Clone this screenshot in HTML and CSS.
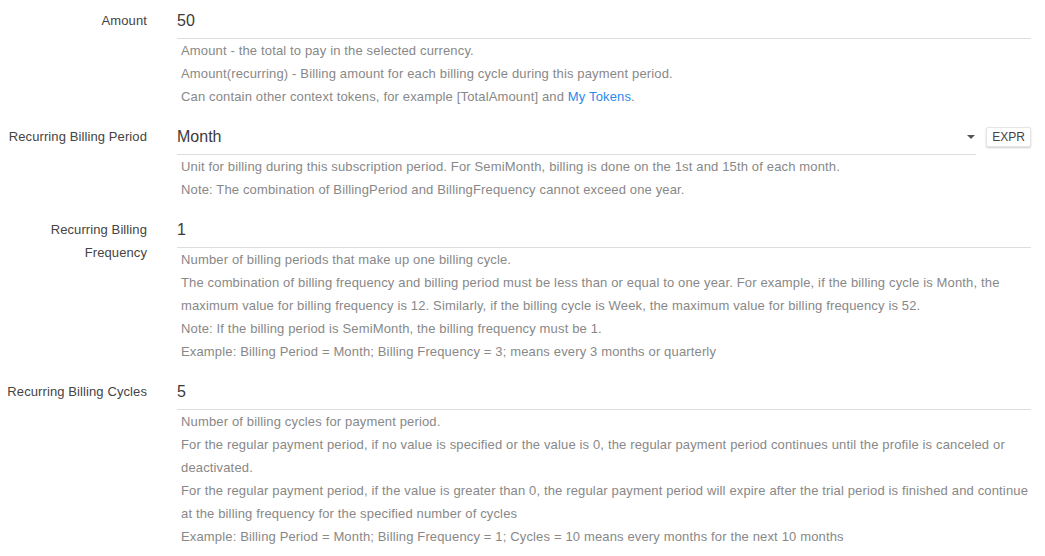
FILE: index.html
```html
<!DOCTYPE html>
<html>
<head>
<meta charset="utf-8">
<link rel="stylesheet" href="styles.css">
</head>
<body>
<div class="form">
  <div class="row">
    <div class="label">Amount</div>
    <div class="field">
      <div class="control">
        <div class="input">50</div>
      </div>
      <div class="help">
        <div>Amount - the total to pay in the selected currency.</div>
        <div>Amount(recurring) - Billing amount for each billing cycle during this payment period.</div>
        <div>Can contain other context tokens, for example [TotalAmount] and <a class="link">My Tokens</a>.</div>
      </div>
    </div>
  </div>

  <div class="row">
    <div class="label">Recurring Billing Period</div>
    <div class="field">
      <div class="control">
        <div class="input select">
          <span>Month</span>
          <span class="caret"></span>
        </div>
        <div class="expr">EXPR</div>
      </div>
      <div class="help">
        <div>Unit for billing during this subscription period. For SemiMonth, billing is done on the 1st and 15th of each month.</div>
        <div>Note: The combination of BillingPeriod and BillingFrequency cannot exceed one year.</div>
      </div>
    </div>
  </div>

  <div class="row">
    <div class="label">Recurring Billing Frequency</div>
    <div class="field">
      <div class="control">
        <div class="input">1</div>
      </div>
      <div class="help">
        <div>Number of billing periods that make up one billing cycle.</div>
        <div>The combination of billing frequency and billing period must be less than or equal to one year. For example, if the billing cycle is Month, the maximum value for billing frequency is 12. Similarly, if the billing cycle is Week, the maximum value for billing frequency is 52.</div>
        <div>Note: If the billing period is SemiMonth, the billing frequency must be 1.</div>
        <div>Example: Billing Period = Month; Billing Frequency = 3; means every 3 months or quarterly</div>
      </div>
    </div>
  </div>

  <div class="row">
    <div class="label">Recurring Billing Cycles</div>
    <div class="field">
      <div class="control">
        <div class="input">5</div>
      </div>
      <div class="help">
        <div>Number of billing cycles for payment period.</div>
        <div>For the regular payment period, if no value is specified or the value is 0, the regular payment period continues until the profile is canceled or deactivated.</div>
        <div>For the regular payment period, if the value is greater than 0, the regular payment period will expire after the trial period is finished and continue at the billing frequency for the specified number of cycles</div>
        <div>Example: Billing Period = Month; Billing Frequency = 1; Cycles = 10 means every months for the next 10 months</div>
      </div>
    </div>
  </div>
</div>
</body>
</html>
```

FILE: styles.css
```css
html, body {
  margin: 0;
  padding: 0;
  background: #fff;
}

body {
  font-family: "Liberation Sans", Arial, sans-serif;
  color: #333;
}

.form {
  padding: 4px 14px 0 0;
}

.row {
  display: grid;
  grid-template-columns: 147px 1fr;
  column-gap: 30px;
  margin-bottom: 12px;
}

.label {
  text-align: right;
  font-size: 13px;
  letter-spacing: 0.1px;
  line-height: 23px;
  padding-top: 5px;
  color: #444;
}

.control {
  display: flex;
  align-items: center;
  gap: 10px;
}

.input {
  flex: 1;
  height: 34px;
  line-height: 34px;
  border-bottom: 1px solid #ddd;
  font-size: 16px;
  color: #3a3a3a;
}

.select {
  display: flex;
  justify-content: space-between;
  align-items: center;
}

.caret {
  width: 0;
  height: 0;
  border-left: 4px solid transparent;
  border-right: 4px solid transparent;
  border-top: 4px solid #555;
  margin-right: 1px;
}

.expr {
  height: 18px;
  line-height: 18px;
  padding: 0 5px;
  font-size: 12px;
  color: #444;
  background: #fff;
  border: 1px solid #e6e6e6;
  border-radius: 2px;
  box-shadow: 0 1px 2px rgba(0, 0, 0, 0.2);
  margin-top: -2px;
}

.help {
  padding: 0 0 0 4px;
  font-size: 13px;
  letter-spacing: 0.15px;
  line-height: 23px;
  color: #888;
}

.link {
  color: #2b8ae8;
  text-decoration: none;
}
```
